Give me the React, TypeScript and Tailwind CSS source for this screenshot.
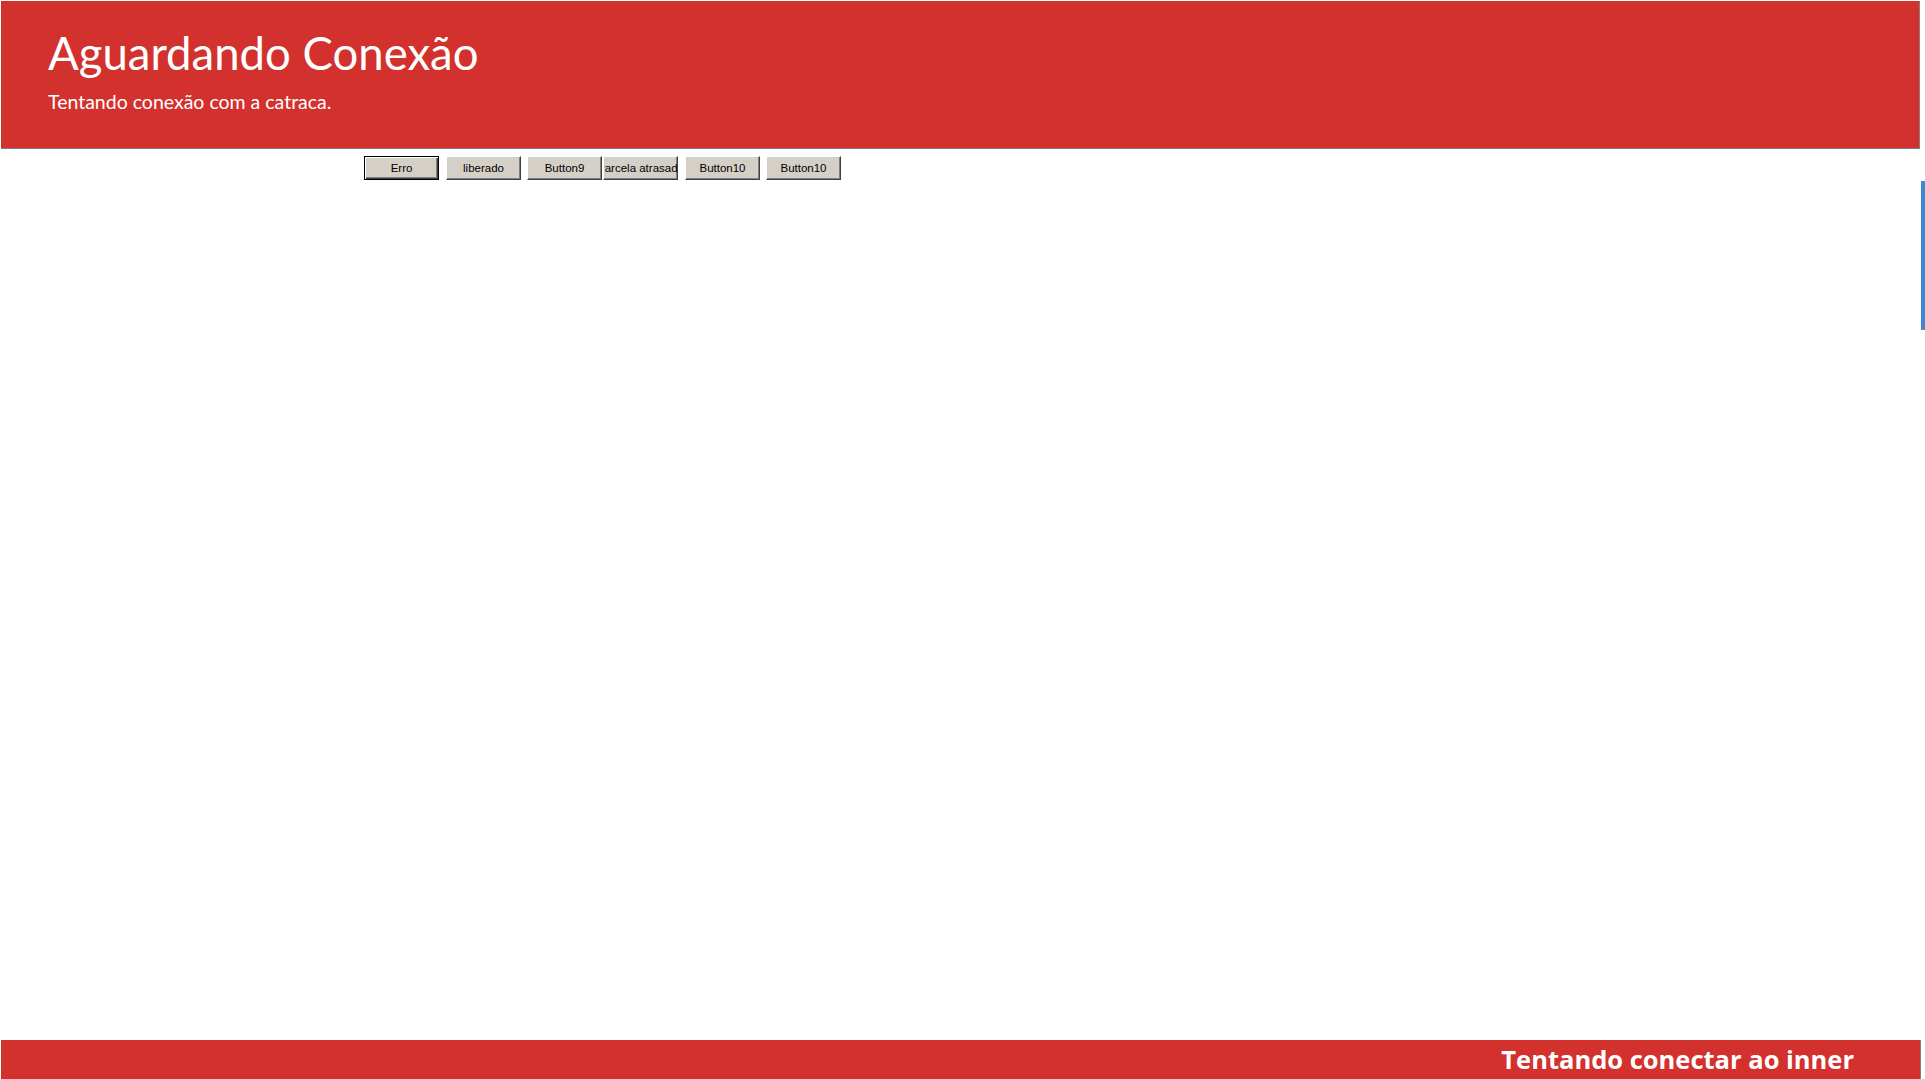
import React from "react";

const buttons = [
  { label: "Erro", ml: "ml-[363px]", isDefault: true },
  { label: "liberado", ml: "ml-[7px]" },
  { label: "Button9", ml: "ml-[6px]" },
  { label: "Parcela atrasada", ml: "ml-px" },
  { label: "Button10", ml: "ml-[7px]" },
  { label: "Button10", ml: "ml-[6px]" },
];

export default function App() {
  return (
    <div className="relative w-[1925px] h-[1079px] overflow-hidden bg-white pt-px pl-px flex flex-col">
      {/* Header */}
      <header className="w-[1919px] h-[148px] shrink-0 bg-[#d3312e] border-r border-b border-[#808080] pl-[47px] pt-[29px] text-white font-['Lato',sans-serif]">
        <h1 className="text-[45.5px] leading-[45px] font-normal">Aguardando Conexão</h1>
        <p className="mt-[17px] text-[19.5px] leading-[20px]">Tentando conexão com a catraca.</p>
      </header>

      {/* Test buttons */}
      <div className="flex mt-[7px] shrink-0">
        {buttons.map((b, i) => (
          <button
            key={i}
            className={`${b.ml} w-[75px] h-[24px] flex items-center justify-center overflow-hidden whitespace-nowrap bg-[#d4d0c8] text-black text-[11.5px] pt-px font-['Liberation_Sans',Arial,sans-serif] ${
              b.isDefault
                ? "border border-black shadow-[inset_1px_1px_0_#ffffff,inset_-1px_-1px_0_#404040,inset_-2px_-2px_0_#808080]"
                : "border border-t-white border-l-white border-r-[#404040] border-b-[#404040] shadow-[inset_-1px_-1px_0_#808080]"
            }`}
          >
            <span className="shrink-0">{b.label}</span>
          </button>
        ))}
      </div>

      <div className="flex-1" />

      {/* Status bar */}
      <footer className="w-[1920px] h-[39px] shrink-0 bg-[#d3312e] border-r border-[#808080] flex items-center justify-end pr-[66px]">
        <span className="text-white text-[25.5px] font-bold font-['Open_Sans',sans-serif] leading-none">Tentando conectar ao inner</span>
      </footer>

      {/* Side indicator */}
      <div className="absolute right-0 top-[181px] w-[4px] h-[149px] bg-[#3b89d0] border-b border-[#808080]" />
    </div>
  );
}
